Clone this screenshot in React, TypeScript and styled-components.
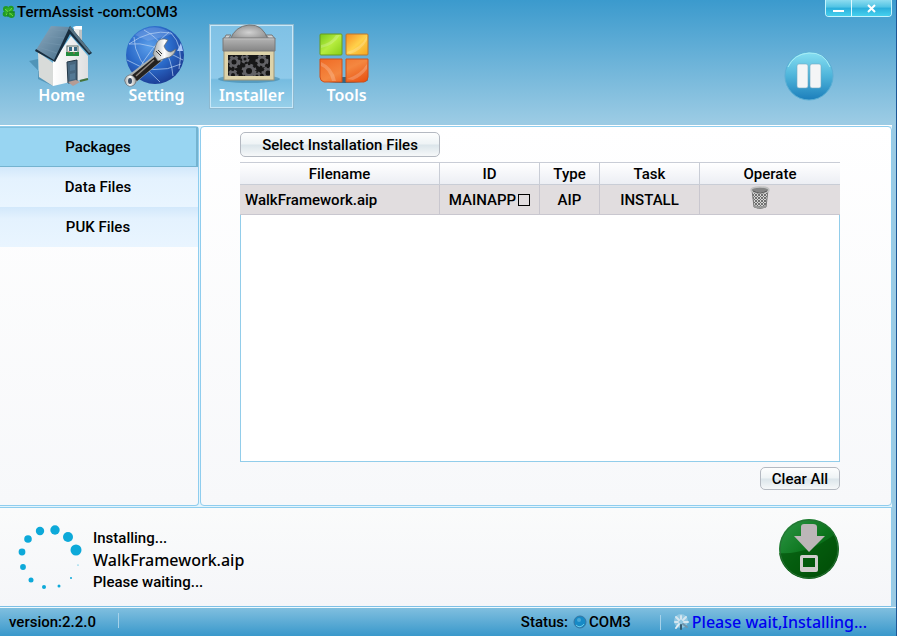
import React from "react";
import styled, { createGlobalStyle, css } from "styled-components";

const Global = createGlobalStyle`
  *, *::before, *::after { box-sizing: border-box; }
  body { margin: 0; background: #9bcbe4; }
  body, button, table { font-family: Roboto, "Liberation Sans", sans-serif; font-size: 15px; font-weight: 500; color: #000; }
  button { padding: 0; margin: 0; border: 0; background: none; cursor: pointer; }
`;

const Window = styled.div`
  display: flex;
  flex-direction: column;
  min-height: 100vh;
  border-right: 1px solid #1c5796;
  background: linear-gradient(#3b9acd 0, #9bcbe4 122px, #9bcbe4 100%);
`;

const Header = styled.header`
  display: flex;
  justify-content: space-between;
  height: 125px;
`;

const HeaderMain = styled.div`
  display: flex;
  flex-direction: column;
`;

const TitleBar = styled.h1`
  display: flex;
  align-items: center;
  gap: 1px;
  height: 24px;
  margin: 0;
  padding-left: 2px;
  font-size: 15px;
  font-weight: 500;
`;

const Toolbar = styled.nav`
  display: flex;
  gap: 10px;
  padding-left: 19px;
`;

const ToolButton = styled.button<{ $active?: boolean }>`
  display: flex;
  flex-direction: column;
  align-items: center;
  width: 85px;
  height: 85px;
  border: 1px solid transparent;
  color: #fff;
  font-family: "Noto Sans", sans-serif;
  font-size: 16px;
  font-weight: 600;
  line-height: 20px;

  ${(p) =>
    p.$active &&
    css`
      border-color: #8fb9cf;
      box-shadow: inset 0 0 0 1px #c8e8f8;
      background: linear-gradient(#7fc1e5 0, #8fcaea 64%, #76bce0 66%, #98d0ea 100%);
    `}

  svg { display: block; overflow: visible; }
`;

const HeaderSide = styled.div`
  display: flex;
  flex-direction: column;
  align-items: flex-end;
  justify-content: space-between;
  padding: 0 4px 24px 0;
`;

const WindowButtons = styled.div`
  display: flex;
  height: 17px;
  border: 1px solid #c2f4fd;
  border-top: 0;
  border-radius: 0 0 4px 4px;
  overflow: hidden;
`;

const WindowButton = styled.button<{ $wide?: boolean }>`
  display: grid;
  place-items: center;
  width: ${(p) => (p.$wide ? 40 : 25)}px;
  background: linear-gradient(#8ddcf0 0, #4fc3e4 45%, #2baedb 50%, #45d0ee 100%);

  & + & { border-left: 1px solid #e0faff; }
`;

const PauseButton = styled.button`
  width: 50px;
  height: 50px;
  margin-right: 58px;

  svg { display: block; }
`;

const Body = styled.div`
  display: flex;
  flex: 1;
  gap: 1px;
  margin-right: 4px;
  padding-bottom: 1px;
  background: #e4f5fd;
  border-top: 1px solid #fff;
`;

const Sidebar = styled.nav`
  width: 199px;
  flex: none;
  border: 1px solid #8fcdee;
  border-left: 0;
  border-radius: 0 4px 4px 0;
  background: linear-gradient(#fff, #f7f8fa);
`;

const SideButton = styled.button<{ $active?: boolean }>`
  display: block;
  width: 100%;
  height: 40px;
  padding-right: 2px;
  background: linear-gradient(#d2e8fb 0, #e4f2fe 30%, #e9f5ff 100%);

  ${(p) =>
    p.$active &&
    css`
      background: #98d5f2;
      box-shadow: inset -2px -1px 0 #74b3d0, inset 0 1px 0 #81bfdc;
    `}
`;

const Main = styled.main`
  display: flex;
  flex-direction: column;
  align-items: flex-start;
  flex: 1;
  padding: 5px 51px 15px 39px;
  border: 1px solid #8fcdee;
  border-radius: 4px;
  background: linear-gradient(#fff, #f7f8fa);
`;

const PushButton = styled.button<{ $small?: boolean }>`
  width: ${(p) => (p.$small ? 80 : 200)}px;
  height: ${(p) => (p.$small ? 23 : 25)}px;
  align-self: ${(p) => (p.$small ? "flex-end" : "flex-start")};
  border: 1px solid #b4b9c1;
  border-radius: 5px;
  background: linear-gradient(#fdfefe 0, #eef3f5 48%, #dbe5ea 52%, #f6f8f9 100%);
`;

const TableFrame = styled.div`
  flex: 1;
  width: 100%;
  margin: 5px 0;
  border: 1px solid #92cdea;
  border-width: 0 1px 1px;
  background: #fff;
`;

const FileTable = styled.table`
  width: calc(100% + 2px);
  margin: 0 -1px;
  border-collapse: separate;
  border-spacing: 0;
  table-layout: fixed;
`;

const Th = styled.th<{ $width?: number }>`
  width: ${(p) => (p.$width ? p.$width + "px" : "auto")};
  height: 23px;
  padding: 0;
  border: 1px solid #c9cdd6;
  border-width: 1px 1px 1px 0;
  background: linear-gradient(#fff, #eceef4);
  font-weight: 500;

  &:last-child { border-right: 0; }
`;

const Td = styled.td<{ $left?: boolean }>`
  height: 30px;
  padding: ${(p) => (p.$left ? "0 0 0 5px" : "0")};
  border: 1px solid #c9c7cf;
  border-width: 0 1px 1px 0;
  background: #e1dddf;
  text-align: ${(p) => (p.$left ? "left" : "center")};
  white-space: nowrap;

  &:last-child { border-right: 0; }
`;

const MissingGlyph = styled.span`
  display: inline-block;
  width: 12px;
  height: 12px;
  margin-left: 2px;
  border: 1px solid #000;
  vertical-align: -1px;
`;

const TrashButton = styled.button`
  display: block;
  margin: 0 auto 4px 50px;

  svg { display: block; }
`;

const Progress = styled.section`
  display: flex;
  align-items: center;
  height: 100px;
  margin-right: 4px;
  padding: 0 51px 0 18px;
  border: 1px solid #8fcdee;
  border-left: 0;
  border-bottom-color: #7ec0e6;
  background: linear-gradient(#fafbfb, #f5f6f9);
`;

const ProgressText = styled.div`
  flex: 1;
  padding: 6px 0 0 9px;
  line-height: 22px;
`;

const CurrentFile = styled.div`
  font-family: "Noto Sans", sans-serif;
  font-size: 16px;
`;

const InstallButton = styled.button`
  margin-bottom: 16px;

  svg { display: block; }
`;

const Footer = styled.footer`
  display: flex;
  align-items: center;
  height: 29px;
  padding: 0 29px 0 9px;
  border-top: 1px solid #f0fafe;
  background: linear-gradient(#80bfdf, #3998cb);
`;

const Separator = styled.span`
  width: 1px;
  height: 15px;
  background: #a5d2ea;
`;

const Version = styled.span`
  flex: 1;
  display: flex;
  gap: 22px;
`;

const Status = styled.span`
  display: flex;
  align-items: center;
  gap: 2px;
  width: 139px;

  svg { margin-left: 3px; }
`;

const Busy = styled.span`
  display: flex;
  align-items: center;
  gap: 2px;
  padding-left: 12px;
  color: #0000f0;
  font-family: "Noto Sans", sans-serif;
  font-size: 16px;
`;

const Clover = () => (
  <svg width="14" height="14" viewBox="0 0 14 14" aria-hidden="true">
    <g fill="#219b24">
      <circle cx="4" cy="4" r="3" /><circle cx="9" cy="3.5" r="2.8" /><circle cx="3.5" cy="9" r="2.8" /><circle cx="9.5" cy="9.5" r="3.4" />
    </g>
    <circle cx="7" cy="6.5" r="4" fill="#2fae2b" />
    <path d="M3 4l8 7M10 3l-6 7" stroke="#72d83d" />
    <path d="M6 7v5M6 7h7" stroke="#12751b" />
  </svg>
);

const HomeIcon = () => (
  <svg width="62" height="60" viewBox="2 1 62 60" aria-hidden="true">
    <defs>
      <linearGradient id="roof" x1="0" y1="0" x2="1" y2="1"><stop stopColor="#8eabc0" /><stop offset="1" stopColor="#426a86" /></linearGradient>
      <linearGradient id="wall"><stop stopColor="#fff" /><stop offset="1" stopColor="#dedfe0" /></linearGradient>
    </defs>
    <path d="M0 37l9-2v20l15 7z" fill="#387a9c" opacity=".55" />
    <path d="M9 28l15 11v23L10 53z" fill="#d8dbd9" />
    <path d="M24 38L42 12l17 20v22L24 62z" fill="url(#wall)" />
    <path d="M45 12V4h8v17z" fill="#e9e9e6" /><path d="M44 3l3-1h6v3h-8z" fill="#fff" /><path d="M50 6h3v15l-3-4z" fill="#bec3c5" />
    <path d="M22 2l19 1L25 37 7 26z" fill="url(#roof)" />
    <path d="M20 6l18 1M16 12l19 2M12 18l20 3M9 23l19 6" stroke="#7597ae" strokeWidth=".6" />
    <path d="M7 25l18 11L41 2l22 27-3 2-19-21-15 28-20-11z" fill="#182d3e" />
    <path d="M41 2l21 26-2 1-20-24z" fill="#577384" />
    <rect x="38" y="22" width="11" height="9" fill="#eee" stroke="#5b6e68" />
    <path d="M40 23h3v4h-3zm5 0h3v4h-3z" fill="#356983" />
    <path d="M37 28h13v4H37z" fill="#238c3e" /><path d="M39 28h2m3 1h2" stroke="#b9685b" />
    <path d="M38 38l10-2v22l-9 1z" fill="#48677f" stroke="#223646" />
    <path d="M41 41l5-1v6l-5 1zm0 9l5-1v6l-5 1z" fill="#547995" />
    <path d="M39 58l8-2 4 2-7 4z" fill="#b69c95" />
    <path d="M51 57l8-2" stroke="#45733a" strokeWidth="2" />
  </svg>
);

const SettingIcon = () => (
  <svg width="64" height="60" viewBox="3 1 64 60" aria-hidden="true">
    <defs>
      <radialGradient id="globe" cx=".4" cy=".35" r=".7"><stop stopColor="#5b9fea" /><stop offset=".55" stopColor="#2a69c8" /><stop offset="1" stopColor="#1a3990" /></radialGradient>
      <linearGradient id="metal"><stop stopColor="#a5aaab" /><stop offset=".5" stopColor="#fff" /><stop offset="1" stopColor="#a5a5a1" /></linearGradient>
    </defs>
    <circle cx="33" cy="31" r="29" fill="url(#globe)" />
    <path d="M13 11Q31-4 51 10L26 17z" fill="#9cb7ee" opacity=".3" />
    <g fill="none" stroke="#b9d3f4" strokeWidth=".7">
      <path d="M7 20Q28 5 49 9Q62 22 57 45M12 13Q12 36 38 58M22 6Q48 20 51 52M5 36Q32 53 59 40M7 20Q27 17 61 36M14 50Q31 20 47 8" />
    </g>
    <path d="M55 27l4-8 2 8z" fill="#abc9fa" />
    <path d="M34 30l7 6-29 24-7-1-1-6z" fill="#a9afaf" />
    <path d="M34 32l5 5-24 20-6-5z" fill="#24211f" />
    <path d="M32 36L14 52" stroke="#8c857e" strokeWidth="1.5" />
    <path d="M4 53q4-4 8 0t0 8q-5 3-8-1t0-7z" fill="url(#metal)" stroke="#606b74" strokeWidth=".7" />
    <ellipse cx="8" cy="57" rx="2" ry="3" fill="#3a4e66" />
    <path d="M31 30l3-9q2-7 9-6l3 1-4 6q2 6 7 6l5-3q-2 8-10 9l-8 3z" fill="url(#metal)" stroke="#62696d" strokeWidth=".7" />
    <path d="M34 27l5 5m-3-6l4 4" stroke="#353535" />
  </svg>
);

const Gear = ({ x, y, r = 5 }: { x: number; y: number; r?: number }) => (
  <g>
    <circle cx={x} cy={y} r={r} fill="#626266" stroke="#626266" strokeWidth="3" strokeDasharray="2.6 2.2" />
    <circle cx={x} cy={y} r={r / 2} fill="#161616" />
  </g>
);

const InstallerIcon = () => (
  <svg width="64" height="60" viewBox="0 0 64 60" aria-hidden="true">
    <defs>
      <linearGradient id="lid" x1="0" y1="0" x2="0" y2="1"><stop stopColor="#b5b5b5" /><stop offset="1" stopColor="#858585" /></linearGradient>
      <radialGradient id="dome"><stop stopColor="#d2d2d2" /><stop offset="1" stopColor="#959595" /></radialGradient>
      <clipPath id="pane"><rect x="8" y="30" width="42" height="21" /></clipPath>
    </defs>
    <ellipse cx="29" cy="54" rx="31" ry="4" fill="#347a9d" opacity=".5" />
    <path d="M10 15Q15 1 29 0t19 15z" fill="url(#dome)" stroke="#777" />
    <path d="M4 14l2-4h5l-3 4zm45 0l-3-4h6l3 4z" fill="#d2d4d5" stroke="#777" />
    <rect x="4" y="25" width="50" height="30" fill="#ddd3aa" stroke="#9e9578" />
    <rect x="8" y="30" width="42" height="21" fill="#171717" />
    <g clipPath="url(#pane)">
      <Gear x={14} y={37} /><Gear x={13} y={50} r={4} /><Gear x={25} y={34} r={3} /><Gear x={29} y={46} r={6} /><Gear x={42} y={36} r={5} /><Gear x={48} y={48} r={5} /><Gear x={37} y={51} r={3} />
    </g>
    <path d="M3 13h52v13H3z" fill="url(#lid)" stroke="#797979" />
    <path d="M4 14h50" stroke="#bebebe" />
  </svg>
);

const ToolsIcon = () => (
  <svg width="54" height="60" viewBox="1 1 54 60" aria-hidden="true">
    <defs>
      <linearGradient id="lime" x2="1" y2="1"><stop stopColor="#77c91c" /><stop offset=".5" stopColor="#b7ed3f" /><stop offset="1" stopColor="#87ce16" /></linearGradient>
      <linearGradient id="amber" x2="1" y2="1"><stop stopColor="#f78c22" /><stop offset=".5" stopColor="#ffd14a" /><stop offset="1" stopColor="#f5a51f" /></linearGradient>
      <linearGradient id="orange" x2="1" y2="1"><stop stopColor="#f06a24" /><stop offset=".5" stopColor="#f48740" /><stop offset="1" stopColor="#e84d0d" /></linearGradient>
    </defs>
    <ellipse cx="26" cy="56" rx="23" ry="3" fill="#356680" />
    <g strokeWidth="1">
      <rect x="1" y="10" width="22" height="21" rx="1" fill="url(#lime)" stroke="#699a21" />
      <rect x="27" y="10" width="22" height="21" rx="1" fill="url(#amber)" stroke="#bb762e" />
      <path d="M1 35h22v23H5q-4-1-4-5zM27 35h22v18q0 4-4 5H27z" fill="url(#orange)" stroke="#ce501b" />
    </g>
    <path d="M2 24Q14 22 21 11h-4Q12 19 2 21zM28 28Q42 24 48 12v4Q42 27 31 30zM2 38q12 5 15 19h-4Q10 45 2 42zM28 55Q42 50 48 40v5q-6 8-14 11z" fill="#fff" opacity=".2" />
  </svg>
);

const PauseIcon = () => (
  <svg width="50" height="50" viewBox="0 0 50 50" aria-hidden="true">
    <defs><linearGradient id="pause" x2="0" y2="1"><stop stopColor="#88e0f2" /><stop offset=".5" stopColor="#4eb4da" /><stop offset="1" stopColor="#1c7ebb" /></linearGradient></defs>
    <circle cx="25" cy="25" r="24" fill="url(#pause)" stroke="#5bafd5" />
    <path d="M4 16Q10 3 25 2t21 14" fill="none" stroke="#a7edf6" />
    <rect x="13" y="13" width="11" height="24" rx="2" fill="#f4f5f6" stroke="#73a9c2" strokeWidth=".6" /><rect x="26" y="13" width="11" height="24" rx="2" fill="#f4f5f6" stroke="#73a9c2" strokeWidth=".6" />
  </svg>
);

const TrashIcon = () => (
  <svg width="20" height="24" viewBox="0 0 20 24" aria-hidden="true">
    <defs><pattern id="mesh" width="3" height="3" patternUnits="userSpaceOnUse"><path fill="#d6d6d5" d="M0 0h3v3H0z" /><path d="M0 0l3 3M3 0L0 3" stroke="#656565" strokeWidth=".9" /></pattern></defs>
    <path d="M2 4l2 17q6 3 12 0l2-17z" fill="url(#mesh)" stroke="#777" />
    <ellipse cx="10" cy="4" rx="9" ry="3" fill="#858585" stroke="#c1c1c1" strokeWidth="1.5" />
    <path d="M3 5q7 4 14 0" fill="none" stroke="#555" /><path d="M4 20q6 3 12 0" fill="none" stroke="#999" strokeWidth="2" />
  </svg>
);

const dots: [number, number, number][] = [
  [58, 26, 5.5], [50, 13, 5], [37, 6, 4.7], [22, 7, 4.2], [10, 15, 3.8], [4, 28, 3.4], [5, 43, 2.9], [13, 56, 2.5], [26, 63, 2], [41, 62, 1.5], [53, 54, 1], [60, 41, 0.6],
];

const Spinner = () => (
  <svg width="66" height="66" viewBox="0 0 66 66" role="img" aria-label="Installing">
    {dots.map(([x, y, r]) => <circle key={x} cx={x} cy={y} r={r} fill="#0da9d9" />)}
  </svg>
);

const DownloadIcon = () => (
  <svg width="62" height="62" viewBox="0 0 62 62" aria-hidden="true">
    <defs><linearGradient id="green" x2="1" y2="1"><stop stopColor="#2f9848" /><stop offset=".5" stopColor="#0b741c" /><stop offset="1" stopColor="#034907" /></linearGradient></defs>
    <circle cx="31" cy="31" r="30" fill="url(#green)" />
    <path d="M1 35Q29 37 56 17A30 30 0 0 1 14 56Q2 47 1 35z" fill="#004d05" opacity=".6" />
    <circle cx="31" cy="31" r="29" fill="none" stroke="#286e35" />
    <path d="M23 9q0-3 3-3h9q4 0 4 3v9h8L31 34 16 18h7z" fill="#bcb6b8" />
    <path d="M24 37h14q2 0 2 2v13q0 2-2 2H24q-2 0-2-2V39q0-2 2-2zm1 3v9h12v-9z" fill="#d0cccc" fillRule="evenodd" />
  </svg>
);

const Led = () => (
  <svg width="14" height="14" viewBox="0 0 14 14" aria-hidden="true">
    <circle cx="7" cy="7" r="6" fill="#178ac6" stroke="#3676a1" /><path d="M3 10q4 4 8-1" fill="none" stroke="#6ccdea" /><circle cx="6" cy="5" r="2" fill="#48a9d8" />
  </svg>
);

const BusyIcon = () => (
  <svg width="17" height="17" viewBox="0 0 17 17" aria-hidden="true">
    <circle cx="8" cy="7" r="7" fill="#b3d8ea" opacity=".6" />
    <g strokeWidth="2" strokeLinecap="round">
      <path d="M8 5V2M10 6l3-3M11 8h4M5 8H2M6 6L3 3" stroke="#d5e6f0" /><path d="M10 10l4 3" stroke="#7293a8" /><path d="M8 11v4" stroke="#355c73" /><path d="M6 10l-3 4" stroke="#e2edf3" />
    </g>
  </svg>
);

const tools = [
  { label: "Home", Icon: HomeIcon },
  { label: "Setting", Icon: SettingIcon },
  { label: "Installer", Icon: InstallerIcon },
  { label: "Tools", Icon: ToolsIcon },
];

const sections = ["Packages", "Data Files", "PUK Files"];

export default function App() {
  return (
    <>
      <Global />
      <Window>
        <Header>
          <HeaderMain>
            <TitleBar><Clover />TermAssist -com:COM3</TitleBar>
            <Toolbar>
              {tools.map(({ label, Icon }) => (
                <ToolButton key={label} $active={label === "Installer"}><Icon />{label}</ToolButton>
              ))}
            </Toolbar>
          </HeaderMain>
          <HeaderSide>
            <WindowButtons>
              <WindowButton aria-label="Minimize"><svg width="11" height="9"><path d="M0 7h11" stroke="#fff" strokeWidth="2" /></svg></WindowButton>
              <WindowButton $wide aria-label="Close"><svg width="9" height="9"><path d="M1 1l7 7M8 1L1 8" stroke="#fff" strokeWidth="2" /></svg></WindowButton>
            </WindowButtons>
            <PauseButton aria-label="Pause"><PauseIcon /></PauseButton>
          </HeaderSide>
        </Header>
        <Body>
          <Sidebar>
            {sections.map((s) => <SideButton key={s} $active={s === "Packages"}>{s}</SideButton>)}
          </Sidebar>
          <Main>
            <PushButton>Select Installation Files</PushButton>
            <TableFrame>
              <FileTable>
                <thead>
                  <tr><Th $width={200}>Filename</Th><Th $width={100}>ID</Th><Th $width={60}>Type</Th><Th $width={100}>Task</Th><Th>Operate</Th></tr>
                </thead>
                <tbody>
                  <tr>
                    <Td $left>WalkFramework.aip</Td><Td>MAINAPP<MissingGlyph /></Td><Td>AIP</Td><Td>INSTALL</Td>
                    <Td><TrashButton aria-label="Delete"><TrashIcon /></TrashButton></Td>
                  </tr>
                </tbody>
              </FileTable>
            </TableFrame>
            <PushButton $small>Clear All</PushButton>
          </Main>
        </Body>
        <Progress>
          <Spinner />
          <ProgressText>
            <div>Installing...</div>
            <CurrentFile>WalkFramework.aip</CurrentFile>
            <div>Please waiting...</div>
          </ProgressText>
          <InstallButton aria-label="Install"><DownloadIcon /></InstallButton>
        </Progress>
        <Footer>
          <Version>version:2.2.0<Separator /></Version>
          <Status>Status: <Led />COM3</Status>
          <Separator />
          <Busy><BusyIcon />Please wait,Installing...</Busy>
        </Footer>
      </Window>
    </>
  );
}
